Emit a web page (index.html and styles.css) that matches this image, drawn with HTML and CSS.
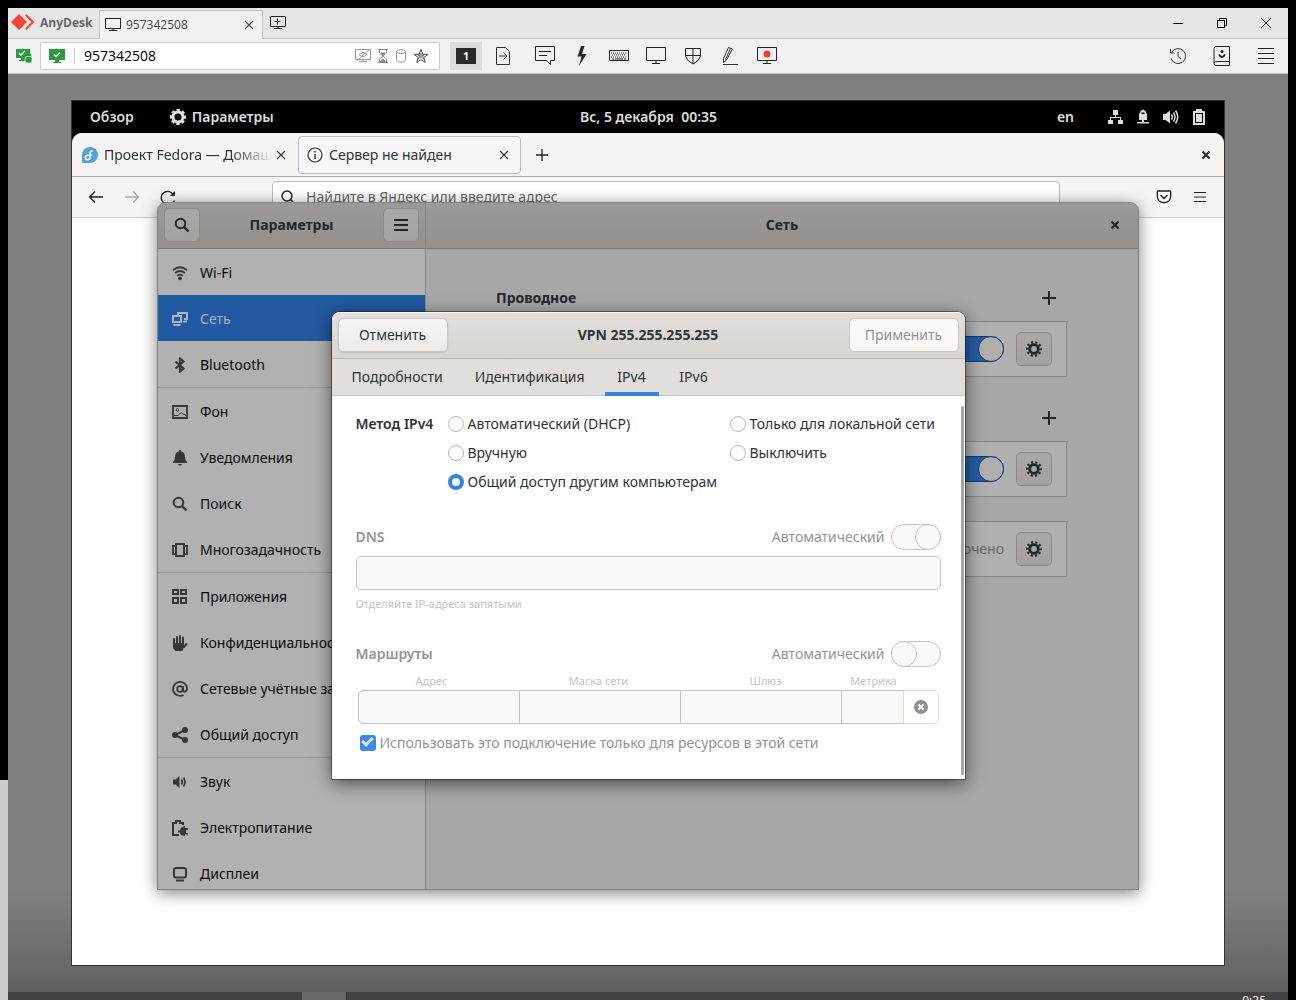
FILE: index.html
```html
<!DOCTYPE html>
<html lang="ru">
<head>
<meta charset="utf-8">
<title>AnyDesk</title>
<link rel="stylesheet" href="styles.css">
</head>
<body>
<svg class="defs" aria-hidden="true">
  <symbol id="gear" viewBox="0 0 16 16"><circle cx="8" cy="8" r="4.3" fill="none" stroke="currentColor" stroke-width="2.8"/><circle cx="8" cy="8" r="6.8" fill="none" stroke="currentColor" stroke-width="2.4" stroke-dasharray="2.1 2.17" stroke-dashoffset="1"/></symbol>
  <symbol id="loupe" viewBox="0 0 16 16"><circle cx="6.5" cy="6.5" r="4.8" fill="none" stroke="currentColor" stroke-width="2"/><path d="M10 10l4.5 4.5" stroke="currentColor" stroke-width="2.4"/></symbol>
  <symbol id="x-bold" viewBox="0 0 16 16"><path d="M4.5 4.5l7 7M11.5 4.5l-7 7" stroke="currentColor" stroke-width="2.2"/></symbol>
  <symbol id="x-thin" viewBox="0 0 16 16"><path d="M4 4l8 8M12 4l-8 8" stroke="currentColor" stroke-width="1.1"/></symbol>
  <symbol id="plus" viewBox="0 0 16 16"><path d="M8 1v14M1 8h14" stroke="currentColor" stroke-width="2"/></symbol>
  <symbol id="sound" viewBox="0 0 16 16"><path d="M1 5.5h2.5L7.500 2v12L3.500 10.500H1z" fill="currentColor"/><path d="M9.500 5.500q1.600 2.500 0 5M11.500 3.500q3 4.500 0 9" fill="none" stroke="currentColor" stroke-width="1.700"/></symbol>
  <symbol id="sound-full" viewBox="0 0 16 16"><path d="M0 5h2.500L7 1.500v13L2.500 11H0z" fill="currentColor"/><path d="M8.500 5.500q1.600 2.500 0 5M10.500 3.500q3 4.500 0 9M12.500 1.500q4.500 6.500 0 13" fill="none" stroke="currentColor" stroke-width="1.500"/></symbol>
</svg>

<div class="anydesk">
  <header class="ad-title">
    <svg class="ad-logo" width="24" height="18" viewBox="0 0 24 18"><path d="M8 1l8 8-8 8-8-8z" fill="#f9443c"/><path d="M14 2.500L15.500 1l8 8-8 8L14 15.500 20.500 9z" fill="#f9443c"/></svg>
    <strong class="ad-name">AnyDesk</strong>
    <div class="ad-tab">
      <svg width="16" height="14" viewBox="0 0 16 14" fill="none" stroke="#222"><path d="M.5.500h15v10H.5zM8 10.500v2.500M4 12.500h8"/></svg>
      <span>957342508</span>
      <button class="icon-btn ad-tab-close" aria-label="Закрыть вкладку"><svg width="16" height="16"><use href="#x-thin"/></svg></button>
    </div>
    <button class="icon-btn" aria-label="Новая вкладка"><svg width="16" height="14" viewBox="0 0 16 14" fill="none" stroke="#222"><path d="M.5.500h15v10H.5zM8 10.500v2.500M4 12.500h8M7.500 2.500v6M4.500 5.500h6"/></svg></button>
    <div class="ad-right">
      <button class="tool" aria-label="Свернуть"><svg width="16" height="16" stroke="#000"><path d="M3 8.500h10"/></svg></button>
      <button class="tool" aria-label="Развернуть"><svg width="16" height="16" fill="none" stroke="#000"><path d="M3.500 5.500h7v7h-7zM5.500 5V3.500h7v7H11"/></svg></button>
      <button class="tool" aria-label="Закрыть"><svg width="16" height="16" stroke="#222"><path d="M3 3l10 10M13 3L3 13"/></svg></button>
    </div>
  </header>

  <div class="ad-bar">
    <svg width="16" height="16" viewBox="0 0 16 16"><path d="M0 1h14v9H0zM5 10h4v2h2v1H3v-1h2z" fill="#2b9a3d"/><path d="M3 5l2 2 4-4" fill="none" stroke="#fff" stroke-width="1.300"/><path d="M10.500 9V7.500a2 2 0 014 0V9" fill="none" stroke="#2b9a3d" stroke-width="1.600"/><rect x="9" y="8.500" width="7" height="6.500" rx="2" fill="#2b9a3d" stroke="#f1f1f1" stroke-width=".7"/></svg>
    <div class="ad-address">
      <svg width="16" height="14" viewBox="0 0 16 14"><path d="M0 0h16v11H0zM6 11h4v2h2v1H4v-1h2z" fill="#2b9a3d"/><path d="M5 5.500l2 2 4-4" fill="none" stroke="#fff" stroke-width="1.300"/></svg>
      <input class="ad-input" aria-label="Адрес рабочего места" value="957342508">
      <svg width="16" height="14" viewBox="0 0 16 14" fill="none" stroke="#999"><path d="M.5.500h15v10H.5zM8 10.500v2.500M4 12.500h8M2 11.500L15 0M4 5.500q4-4 8 0-4 4-8 0z"/></svg>
      <svg width="12" height="16" viewBox="0 0 12 16" fill="none" stroke="#8a8a8a"><path d="M1 1.500h10M1 14.500h10M2.500 2v3L6 8l3.500-3V2M2.500 14v-3L6 8l3.500 3v3"/><path d="M3 14l3-3 3 3zM4 5h4L6 7z" fill="#8a8a8a"/></svg>
      <svg width="12" height="16" viewBox="0 0 12 16" fill="none" stroke="#999"><ellipse cx="6" cy="3.500" rx="4.500" ry="2"/><path d="M1.500 3.500v9q4.500 3.500 9 0v-9"/></svg>
      <svg width="16" height="16" viewBox="0 0 16 16" fill="none" stroke="#444"><path d="M8 1.500l1.800 4.700 5 .2-4 3.100 1.500 4.900L8 11.600l-4.300 2.800 1.500-4.900-4-3.100 5-.2z"/><path d="M8 5l3 6-6-4h6l-6 4z" stroke-width=".6"/></svg>
    </div>
    <button class="tool tool-on"><span class="ad-num">1</span></button>
    <button class="tool" aria-label="Передача файлов"><svg width="16" height="20" viewBox="0 0 16 20" fill="none" stroke="#333"><path d="M1.500 1.500h9l4 4v13h-13zM4 10h8M8.500 6.500L12 10l-3.500 3.500"/></svg></button>
    <button class="tool tool-gap" aria-label="Чат"><svg width="20" height="20" viewBox="0 0 20 20" fill="none" stroke="#222"><path d="M.5.500h19v14H15.500v4l-4-4H.5zM4 5.500h12M4 9.500h8"/></svg></button>
    <button class="tool" aria-label="Действия"><svg width="12" height="20" viewBox="0 0 12 20"><path d="M5 0h3.500L6 8h4.500L3 20l2.500-9.500H1.500z" fill="#2a2a2a"/></svg></button>
    <button class="tool" aria-label="Клавиатура"><svg width="20" height="12" viewBox="0 0 20 12" fill="none" stroke="#222"><path d="M.5.500h19v10H.5z"/><path d="M2 3h16M3 5h14M2 7h16" stroke-dasharray="1 1"/><path d="M3 9h2M6 9h8M15 9h2"/></svg></button>
    <button class="tool" aria-label="Экран"><svg width="20" height="18" viewBox="0 0 20 18" fill="none" stroke="#222"><path d="M.5.500h19v13H.5zM10 14v3M6 16.500h8"/></svg></button>
    <button class="tool" aria-label="Разрешения"><svg width="16" height="18" viewBox="0 0 16 18" fill="none" stroke="#222"><path d="M.5 1.500h15V9q-1 5-7.500 8Q1.500 14 .5 9zM8 1.500V17M.5 8.500h15"/></svg></button>
    <button class="tool" aria-label="Доска"><svg width="16" height="18" viewBox="0 0 16 18" fill="none" stroke="#333"><path d="M1.500 15.500v-4L6.500.500l4 1.500-6 11zM8.500 1.500l-5 11M1 17.500h15"/></svg></button>
    <button class="tool" aria-label="Запись"><svg width="20" height="18" viewBox="0 0 20 18" fill="none" stroke="#222"><path d="M.5.500h19v13H.5zM10 14v3M6 16.500h8"/><circle cx="10" cy="7" r="3.500" fill="#e5433b" stroke="none"/></svg></button>
    <div class="ad-right">
      <button class="tool" aria-label="История"><svg width="18" height="18" viewBox="0 0 18 18" fill="none" stroke="#333"><path d="M2.500 5.500a7.500 7.500 0 11-.5 6M1.500 2v4h4M9 5v4.500l3 2.500"/></svg></button>
      <button class="tool" aria-label="Адресная книга"><svg width="18" height="20" viewBox="0 0 18 20" fill="none" stroke="#222"><path d="M3 .5h13.500v19H3Q1 19.500 1 17.500V2.500Q1 .5 3 .5zM1 17q1-1.500 3-1.500h12.500"/><circle cx="9" cy="5.500" r="1.500" fill="#222" stroke="none"/><path d="M6 8.500q3 5 6 0" stroke-width="1.800"/></svg></button>
      <button class="tool" aria-label="Меню"><svg width="16" height="18" stroke="#222"><path d="M0 1.500h16M0 6.500h16M0 11.500h16M0 16.500h16"/></svg></button>
    </div>
  </div>

  <div class="ad-view">
    <div class="screen">
      <div class="topbar">
        <div class="tb-left"><span>Обзор</span><span class="tb-app"><svg width="16" height="16" viewBox="0 0 16 16" fill="none" stroke="currentColor"><circle cx="8" cy="8" r="5" stroke-width="3"/><circle cx="8" cy="8" r="7" stroke-width="2.200" stroke-dasharray="3.400 2.098" stroke-dashoffset="1.700"/></svg>Параметры</span></div>
        <time>Вс, 5 декабря&nbsp; 00:35</time>
        <div class="tb-right">
          <span class="tb-lang">en</span>
          <svg width="16" height="16" fill="currentColor"><path d="M6 1h5v5H6zM8 6h1v2h5v3h-1V9H4v2H3V8h5zM1 11h5v4H1zM11 11h5v4h-5z"/></svg>
          <svg width="16" height="16" fill="currentColor"><path fill-rule="evenodd" d="M4 11V5.500L5.500 2 8 .5 10.500 2 12 5.500V11zM6.500 5h3V3.500h-3zM7 11h2v2h5v1.500H2V13h5z"/></svg>
          <svg width="16" height="16"><use href="#sound-full"/></svg>
          <svg width="16" height="16" fill="currentColor"><path fill-rule="evenodd" d="M5 0h6v2h3v14H2V2h3zM4 4v10h8V4z"/><path d="M5 5h6v8H5z"/></svg>
        </div>
      </div>

      <div class="firefox">
        <div class="ff-tabs">
          <div class="ff-tab">
            <svg width="16" height="16"><path d="M0 8a8 8 0 018-8 8 8 0 010 16H0z" fill="#51a2da"/><path d="M11 4.500Q8 3 8 6.500v4a2.300 2.300 0 11-2.300-2.300H10" fill="none" stroke="#fff" stroke-width="1.500"/></svg>
            <span class="ff-label ff-fade">Проект Fedora — Домаш</span>
            <button class="icon-btn" aria-label="Закрыть"><svg width="16" height="16"><use href="#x-thin"/></svg></button>
          </div>
          <div class="ff-tab ff-active">
            <svg width="16" height="16" fill="none" stroke="#2b2b33"><circle cx="8" cy="8" r="7" stroke-width="1.200"/><path d="M8 7v5M8 4v1.500" stroke-width="1.400"/></svg>
            <span class="ff-label">Сервер не найден</span>
            <button class="icon-btn" aria-label="Закрыть"><svg width="16" height="16"><use href="#x-thin"/></svg></button>
          </div>
          <button class="icon-btn ff-plus" aria-label="Новая вкладка"><svg width="16" height="16" stroke="#222" stroke-width="1.300"><path d="M8 2v12M2 8h12"/></svg></button>
          <button class="icon-btn ff-close" aria-label="Закрыть окно"><svg width="16" height="16"><use href="#x-bold"/></svg></button>
        </div>
        <div class="ff-nav">
          <button class="tool" aria-label="Назад"><svg width="16" height="16" fill="none" stroke="#222" stroke-width="1.300"><path d="M15 8H2M7 2.500L1.500 8 7 13.500"/></svg></button>
          <button class="tool" aria-label="Вперёд"><svg width="16" height="16" fill="none" stroke="#aaa" stroke-width="1.300"><path d="M1 8h13M9 2.500L14.500 8 9 13.500"/></svg></button>
          <button class="tool" aria-label="Обновить"><svg width="16" height="16" fill="none" stroke="#222" stroke-width="1.400"><path d="M13 5.500A6.300 6.300 0 108.500 15q4 0 6-3.500"/><path d="M15 2v5h-5z" fill="#222" stroke="none"/></svg></button>
          <div class="ff-url">
            <svg width="16" height="16" fill="none" stroke="#222" stroke-width="1.400"><circle cx="7" cy="7" r="5"/><path d="M10.500 10.500L14 14"/></svg>
            <input placeholder="Найдите в Яндекс или введите адрес" aria-label="Адресная строка">
          </div>
          <button class="tool" aria-label="Pocket"><svg width="16" height="16" fill="none" stroke="#222" stroke-width="1.400"><path d="M2 2h12q.7 0 .7.700V7Q14.500 13.500 8 13.700 1.500 13.500 1.300 7V2.700Q1.300 2 2 2zM4.500 6L8 9.500 11.500 6"/></svg></button>
          <button class="tool" aria-label="Меню"><svg width="16" height="16" stroke="#222" stroke-width="1.200"><path d="M2 3.500h12M2 8h12M2 12.500h12"/></svg></button>
        </div>
      </div>

      <section class="settings">
        <header class="st-head">
          <div class="st-head-side">
            <button class="dim-btn" aria-label="Поиск"><svg width="16" height="16"><use href="#loupe"/></svg></button>
            <h1>Параметры</h1>
            <button class="dim-btn" aria-label="Меню"><svg width="16" height="16" stroke="currentColor" stroke-width="2"><path d="M1 3h14M1 8h14M1 13h14"/></svg></button>
          </div>
          <div class="st-head-main">
            <h2>Сеть</h2>
            <button class="icon-btn st-close" aria-label="Закрыть"><svg width="16" height="16"><use href="#x-bold"/></svg></button>
          </div>
        </header>
        <div class="st-body">
          <nav class="side">
            <a href="#"><svg width="16" height="16" fill="none" stroke="currentColor" stroke-width="1.800"><path d="M1 5q7-5.500 14 0M3 8q5-4 10 0M5.300 10.700q2.700-2 5.400 0"/><circle cx="8" cy="13.300" r="1.900" fill="currentColor" stroke="none"/></svg>Wi-Fi</a>
            <a href="#" class="on"><svg width="16" height="16" fill="none" stroke="currentColor" stroke-width="2"><path d="M1 5h8v6H1zM1.500 14h7M6 4V2h9v6h-3M11 10.500h4"/></svg>Сеть</a>
            <a href="#"><svg width="16" height="16" fill="none" stroke="currentColor" stroke-width="2.200"><path d="M3.500 4.500l8 7L8 14.500v-13l3.500 3-8 7"/></svg>Bluetooth</a>
            <a href="#" class="sep"><svg width="16" height="16" fill="none" stroke="currentColor"><path d="M1 2h14v12H1z" stroke-width="1.800"/><path d="M2 11.500h4l3-3 2 2 1-.5 2 1.500"/><circle cx="5.500" cy="6" r="1.300"/></svg>Фон</a>
            <a href="#"><svg width="16" height="16" fill="currentColor"><path d="M8 0q1.300 0 1.300 1.500Q13 2.500 13 7q0 3.500 2 5v1H1v-1q2-1.500 2-5 0-4.500 3.700-5.500Q6.700 0 8 0zM6 14h4q-.5 1.800-2 1.800T6 14z"/></svg>Уведомления</a>
            <a href="#"><svg width="16" height="16"><use href="#loupe"/></svg>Поиск</a>
            <a href="#"><svg width="16" height="16" fill="none" stroke="currentColor" stroke-width="2"><path d="M4 2h8v12H4z"/><path d="M3 4H1v8h2M13 4h2v8h-2" stroke-width="1.800"/></svg>Многозадачность</a>
            <a href="#" class="sep"><svg width="16" height="16" fill="none" stroke="currentColor" stroke-width="2"><path d="M1 1h5v4H1zM9 1h5v4H9zM1 9h5v5H1zM9 9h5v5H9z"/></svg>Приложения</a>
            <a href="#"><svg width="16" height="16" fill="none" stroke="currentColor" stroke-width="2" stroke-linecap="round"><path d="M2 4v6M5 2v8M8 1v9M11 2.500V11M14.500 9L12 12"/><path d="M1 8h11v3.500L10.500 16h-7L1 13z" fill="currentColor" stroke="none"/></svg>Конфиденциальность</a>
            <a href="#"><svg width="16" height="16" fill="none" stroke="currentColor" stroke-width="1.800"><circle cx="8" cy="8" r="2.800"/><path d="M11 5v4.500q.5 1.500 2 1.200 2.200-.7 2-3.700A7 7 0 1011.500 14"/></svg>Сетевые учётные записи</a>
            <a href="#"><svg width="16" height="16" fill="currentColor"><circle cx="3" cy="8" r="3"/><circle cx="13" cy="3" r="3"/><circle cx="13" cy="13" r="3"/><path d="M13 3L3 8l10 5" fill="none" stroke="currentColor" stroke-width="2"/></svg>Общий доступ</a>
            <a href="#" class="sep"><svg width="16" height="16"><use href="#sound"/></svg>Звук</a>
            <a href="#"><svg width="16" height="16" fill="none" stroke="currentColor" stroke-width="2"><path d="M7 15H1V3h3V1h4v2h3v2"/><path d="M13 6v2h3v2h-2v3h2v1.500h-3V16q-5-.500-5-3.500H6v-2h2Q8 7 13 6z" fill="currentColor" stroke="none"/></svg>Электропитание</a>
            <a href="#"><svg width="16" height="16" fill="none" stroke="currentColor" stroke-width="2"><rect x="2" y="2" width="12" height="9.500" rx="2"/><path d="M4 14.500h8"/></svg>Дисплеи</a>
          </nav>
          <main class="panel">
            <div class="net">
              <section class="group">
                <div class="group-head"><h3>Проводное</h3><button class="icon-btn" aria-label="Добавить проводное подключение"><svg width="16" height="16"><use href="#plus"/></svg></button></div>
                <div class="box"><input type="checkbox" role="switch" class="switch blue" checked aria-label="Проводное"><button class="dim-btn" aria-label="Настройки проводного"><svg width="16" height="16"><use href="#gear"/></svg></button></div>
              </section>
              <section class="group">
                <div class="group-head"><button class="icon-btn" aria-label="Добавить VPN"><svg width="16" height="16"><use href="#plus"/></svg></button></div>
                <div class="box"><input type="checkbox" role="switch" class="switch blue" checked aria-label="VPN"><button class="dim-btn" aria-label="Настройки VPN"><svg width="16" height="16"><use href="#gear"/></svg></button></div>
              </section>
              <div class="box"><span>Отключено</span><button class="dim-btn" aria-label="Настройки прокси"><svg width="16" height="16"><use href="#gear"/></svg></button></div>
            </div>
          </main>
        </div>

        <form class="dialog" role="dialog" aria-label="VPN 255.255.255.255">
          <header class="dl-head">
            <button type="button" class="btn">Отменить</button>
            <h2>VPN 255.255.255.255</h2>
            <button type="button" class="btn" disabled>Применить</button>
          </header>
          <div class="dl-tabs">
            <button type="button">Подробности</button><button type="button">Идентификация</button><button type="button" class="on">IPv4</button><button type="button">IPv6</button>
          </div>
          <div class="dl-body">
            <fieldset class="method">
              <legend>Метод IPv4</legend>
              <div class="choices">
                <label><input type="radio" name="m">Автоматический (DHCP)</label>
                <label><input type="radio" name="m">Только для локальной сети</label>
                <label><input type="radio" name="m">Вручную</label>
                <label><input type="radio" name="m">Выключить</label>
                <label><input type="radio" name="m" checked>Общий доступ другим компьютерам</label>
              </div>
            </fieldset>
            <section>
              <div class="line"><label class="cap" for="dns">DNS</label><label class="auto">Автоматический<input type="checkbox" role="switch" class="switch" checked disabled></label></div>
              <input id="dns" class="entry" disabled>
              <p class="hint">Отделяйте IP-адреса запятыми</p>
            </section>
            <section>
              <div class="line"><span class="cap">Маршруты</span><label class="auto">Автоматический<input type="checkbox" role="switch" class="switch" disabled></label></div>
              <div class="route-labels"><label for="r1">Адрес</label><label for="r2">Маска сети</label><label for="r3">Шлюз</label><label for="r4">Метрика</label></div>
              <div class="route">
                <input id="r1" disabled><input id="r2" disabled><input id="r3" disabled><input id="r4" disabled>
                <button type="button" disabled aria-label="Удалить маршрут"><svg width="16" height="16"><circle cx="8" cy="8" r="7" fill="#8e9090"/><path d="M5.500 5.500l5 5M10.500 5.500l-5 5" stroke="#fff" stroke-width="2"/></svg></button>
              </div>
              <label class="only"><input type="checkbox" checked disabled>Использовать это подключение только для ресурсов в этой сети</label>
            </section>
            <span class="thumb"></span>
          </div>
        </form>
      </section>
    </div>
  </div>

  <footer class="taskbar"><span class="task"></span><time>0:35</time></footer>
</div>
</body>
</html>
```
FILE: styles.css
```css
*, ::before { box-sizing: border-box; }

body {
  margin: 0;
  min-height: 100vh;
  padding: 8px 8px 0;
  background: linear-gradient(#cdcdcd, #cdcdcd) 0 780px / 8px 100% no-repeat #000;
  font: 14px/20px "Noto Sans", "Liberation Sans", sans-serif;
  color: #2e3436;
  overflow: hidden;
}

h1, h2, h3, p, fieldset, legend { margin: 0; padding: 0; border: 0; font-size: 14px; }
svg { display: block; flex: none; }
button, input { font: inherit; color: inherit; margin: 0; padding: 0; }
button { border: 0; background: none; }
.defs { position: absolute; width: 0; height: 0; }
.icon-btn { display: grid; place-items: center; width: 16px; height: 16px; flex: none; }

/* AnyDesk client window */
.anydesk {
  display: flex;
  flex-direction: column;
  height: calc(100vh - 8px);
  font-family: "Open Sans", "Noto Sans", sans-serif;
}
.ad-title {
  display: flex;
  align-items: center;
  height: 31px;
  padding: 0 6px 0 3px;
  background: #e6e6e6;
  border-bottom: 1px solid #c3c3c3;
}
.ad-name { width: 60px; padding-left: 5px; font-size: 12px; color: #666; }
.ad-logo { margin-bottom: 3px; }
.ad-tab {
  display: flex;
  align-items: center;
  gap: 5px;
  align-self: flex-end;
  width: 164px;
  height: 29px;
  margin: 0 7px -1px 4px;
  padding: 0 5px;
  background: #f1f1f1;
  border: 1px solid #c3c3c3;
  border-bottom: 0;
  font-size: 12px;
  color: #444;
}
.ad-tab-close { margin-left: auto; }
.ad-right { display: flex; gap: 12px; margin-left: auto; }
.tool { display: grid; place-items: center; width: 32px; height: 28px; flex: none; }
.ad-bar {
  display: flex;
  align-items: center;
  gap: 5px;
  height: 35px;
  padding: 0 6px 0 8px;
  background: #f1f1f1;
  border-bottom: 1px solid #c3c3c3;
}
.ad-address {
  display: flex;
  align-items: center;
  gap: 6px;
  width: 400px;
  height: 28px;
  margin: 0 5px 0 3px;
  padding: 0 10px 0 8px;
  background: #fff;
  border: 1px solid #ccc;
}
.ad-input {
  flex: 1;
  min-width: 0;
  height: 16px;
  margin-left: 3px;
  padding-left: 9px;
  border: 0;
  border-left: 1px solid #ccc;
  color: #000;
}
.tool-on { background: #dcdcdc; }
.tool-gap { margin-left: 5px; }
.ad-num { width: 20px; height: 16px; background: #2a2a2a; color: #fff; font: bold 10px/16px "Open Sans", sans-serif; }
.ad-view {
  flex: 1;
  min-height: 0;
  padding: 26px 63px;
  background: linear-gradient(#808080, #808080 816px, #616161 918px);
}
.taskbar {
  display: flex;
  justify-content: space-between;
  height: 8px;
  padding: 0 22px 0 294px;
  background: #424242;
  overflow: hidden;
  color: #fff;
  font-size: 12px;
  line-height: 18px;
}
.task { width: 45px; background: #696969; border-right: 1px solid #333; }

/* Remote GNOME desktop */
.screen {
  position: relative;
  display: flex;
  flex-direction: column;
  height: 100%;
  border: 1px solid #333;
  background: #000;
  font-family: "Noto Sans", sans-serif;
}
.topbar {
  display: grid;
  grid-template-columns: 1fr auto 1fr;
  align-items: center;
  height: 32px;
  padding: 0 17px 0 18px;
  color: #ddd;
  font-weight: 600;
}
.tb-left, .tb-app, .tb-right { display: flex; align-items: center; }
.tb-left { gap: 36px; }
.tb-app { gap: 6px; }
.tb-right { justify-content: flex-end; gap: 12px; }
.tb-lang { margin-right: 21px; }

/* Browser behind */
.firefox { flex: 1; display: flex; flex-direction: column; background: #fff; border-radius: 10px 10px 0 0; overflow: hidden; }
.ff-tabs {
  display: flex;
  align-items: center;
  height: 44px;
  padding: 0 10px 0 0;
  background: #f5f4f2;
  border-bottom: 1px solid #aaa;
}
.ff-tab { display: flex; align-items: center; gap: 6px; width: 222px; height: 38px; padding: 0 7px 0 10px; flex: none; }
.ff-active { width: 223px; margin-left: 4px; padding: 0 8px; background: #f7f7f8; border: 1px solid #bcbcc6; border-radius: 4px; }
.ff-label { flex: 1; white-space: nowrap; }
.ff-fade { margin-right: -6px; mask-image: linear-gradient(90deg, #000 75%, transparent); }
.ff-plus { margin-left: 13px; }
.ff-close { margin-left: auto; }
.ff-nav {
  display: flex;
  align-items: center;
  gap: 4px;
  height: 41px;
  padding: 0 8px;
  background: #f5f5f5;
  border-bottom: 1px solid #ccc;
}
.ff-url {
  display: flex;
  align-items: center;
  gap: 10px;
  flex: 1;
  height: 32px;
  margin: 0 84px;
  padding: 0 7px;
  background: #fff;
  border: 1px solid #bbb;
  border-radius: 4px;
}
.ff-url input { flex: 1; border: 0; background: none; }
.ff-url input::placeholder { color: #666; opacity: 1; }

/* Settings window, dimmed beneath its modal dialog */
.settings {
  position: absolute;
  inset: 101px 85px 75px;
  display: flex;
  flex-direction: column;
  background: #a7a7a7;
  border: 1px solid #838280;
  border-radius: 9px 9px 0 0;
  box-shadow: 0 3px 16px rgba(0, 0, 0, .5);
}
.st-head {
  display: flex;
  height: 46px;
  padding-bottom: 1px;
  background: linear-gradient(#9c9a98, #93908d);
  border-bottom: 1px solid #7c7a78;
  border-radius: 8px 8px 0 0;
  color: #20262a;
}
.st-head-side {
  display: flex;
  align-items: center;
  justify-content: space-between;
  width: 268px;
  padding: 0 6px;
  border-right: 1px solid #868482;
}
.st-head-main { flex: 1; display: grid; place-items: center; position: relative; }
.st-close { position: absolute; right: 15px; }
.dim-btn {
  display: grid;
  place-items: center;
  width: 36px;
  height: 34px;
  background: linear-gradient(#a9a8a6, #a3a2a0);
  border: 1px solid #8c8a88;
  border-radius: 5px;
  color: #20262a;
}
.st-body { flex: 1; min-height: 0; display: flex; }
.side {
  width: 268px;
  background: #b1b1b1;
  border-right: 1px solid #868686;
  overflow: hidden;
}
.side a {
  display: flex;
  align-items: center;
  gap: 12px;
  height: 46px;
  padding: 1px 14px 0;
  color: #0a0a0a;
  text-decoration: none;
  white-space: nowrap;
}
.side svg { color: #363636; }
.side .on, .side .on svg { background: #2259a0; color: #a3b6d0; }
.side .sep { height: 47px; border-top: 1px solid #999; }
.panel { flex: 1; padding: 32px 71px 0 70px; }
.net { display: grid; gap: 24px; }
.group { display: grid; gap: 6px; }
.group-head { display: flex; align-items: center; height: 34px; padding-right: 10px; color: #20262a; }
.group-head .icon-btn { margin-left: auto; }
.box {
  display: flex;
  align-items: center;
  justify-content: flex-end;
  gap: 12px;
  height: 56px;
  padding: 0 14px;
  background: #b0b0b0;
  border: 1px solid #868686;
  color: #666;
}
.switch {
  appearance: none;
  display: flex;
  flex: none;
  width: 50px;
  height: 26px;
  border: 1px solid #c8c6c3;
  border-radius: 13px;
  background: #faf9f8;
}
.switch::before {
  content: "";
  width: 26px;
  height: 26px;
  margin: -1px;
  border: 1px solid #c8c6c3;
  border-radius: 50%;
  background: #faf9f8;
}
.switch:checked { justify-content: flex-end; }
.blue { background: #255ca5; border-color: #15396b; }
.blue::before { background: #b0afae; border-color: #15396b; }

/* VPN connection editor */
.dialog {
  position: absolute;
  inset: 0 0 2px;
  margin: auto;
  width: 633px;
  height: fit-content;
  background: #fff;
  border-radius: 8px 8px 0 0;
  box-shadow: 0 0 0 1px rgba(0, 0, 0, .4), 0 4px 18px rgba(0, 0, 0, .6);
}
.dl-head {
  display: flex;
  align-items: center;
  justify-content: space-between;
  height: 47px;
  padding: 0 6px;
  background: linear-gradient(#e1dedb, #d9d5d1);
  border-top: 1px solid #f8f7f6;
  border-bottom: 1px solid #bdb7b1;
  border-radius: 8px 8px 0 0;
}
.btn {
  width: 110px;
  height: 34px;
  background: linear-gradient(#f7f6f5, #ecebe9);
  border: 1px solid #cdc7c2;
  border-radius: 5px;
  box-shadow: 0 1px 2px rgba(0, 0, 0, .1);
}
.btn:disabled { background: #faf9f8; color: #929595; box-shadow: none; }
.dl-tabs {
  display: flex;
  gap: 8px;
  height: 37px;
  padding: 0 8px;
  background: #e1dedb;
  border-bottom: 1px solid #cdc7c2;
}
.dl-tabs button { min-width: 54px; height: 37px; padding: 3px 12px 0; border-bottom: 4px solid transparent; }
.dl-tabs .on { border-bottom-color: #3584e4; }
.dl-body { position: relative; display: grid; gap: 30px; padding: 16px 24px 24px; }
.thumb { position: absolute; top: 10px; right: 1px; bottom: 4px; width: 3px; border-radius: 2px; background: #a3a5a6; }
.method { display: flex; line-height: 24px; }
legend { float: left; width: 92px; font-weight: 600; }
.choices { flex: 1; display: grid; grid-template-columns: 282px 1fr; gap: 5px 0; white-space: nowrap; }
.choices label, .only, .auto, .line { display: flex; align-items: center; }
.choices label, .only { gap: 4px; }
[type="radio"] { appearance: none; width: 16px; height: 16px; flex: none; border: 1px solid #bbb6b2; border-radius: 50%; background: #fff; }
[type="radio"]:checked { border: 4px solid #3584e4; }
.line { justify-content: space-between; height: 26px; margin-bottom: 6px; color: #929595; }
.cap { font-weight: 600; }
.auto { gap: 6px; }
.entry, .route input { height: 34px; background: #faf9f8; border: 1px solid #c4c2c0; }
.entry { display: block; width: 100%; border-radius: 5px; }
.hint { margin-top: 6px; font-size: 11px; line-height: 15px; color: #c2c4c5; }
.route-labels {
  display: grid;
  grid-template-columns: 152px 182px 152px 64px;
  justify-items: center;
  padding-bottom: 2px;
  font-size: 11px;
  line-height: 15px;
  color: #c2c4c5;
}
.route { display: grid; grid-template-columns: 162px 161px 161px 62px 35px; padding: 0 2px; }
.route input { width: 100%; min-width: 0; border-left-width: 0; }
.route input:first-child { border-left-width: 1px; border-radius: 5px 0 0 5px; }
.route input:nth-child(4) { border-right-color: #e2e0de; }
.route button { display: grid; place-items: center; border: 1px solid #e2e0de; border-left: 0; border-radius: 0 5px 5px 0; }
.only { height: 24px; margin-top: 7px; padding-left: 4px; color: #929595; }
.only input {
  appearance: none;
  display: grid;
  place-items: center;
  width: 16px;
  height: 16px;
  border-radius: 3px;
  background: #3d88e4;
}
.only input::before {
  content: "";
  width: 11px;
  height: 7px;
  margin-bottom: 4px;
  border: solid #dce9fa;
  border-width: 0 0 3px 3px;
  rotate: -45deg;
}
```
